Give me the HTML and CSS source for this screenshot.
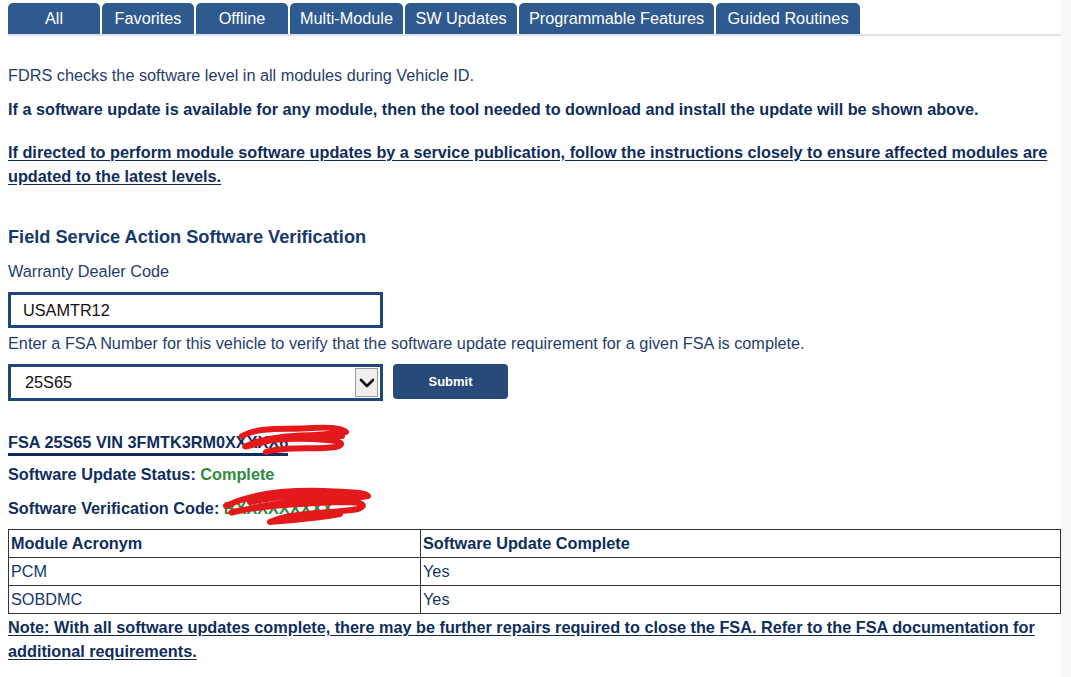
FILE: index.html
```html
<!DOCTYPE html>
<html lang="en">
<head>
<meta charset="utf-8">
<title>FDRS - SW Updates</title>
<link rel="stylesheet" href="styles.css">
</head>
<body>
<div class="page">
  <nav class="tabs">
    <a class="tab tab-all">All</a>
    <a class="tab tab-fav">Favorites</a>
    <a class="tab tab-off">Offline</a>
    <a class="tab tab-multi">Multi-Module</a>
    <a class="tab tab-sw">SW Updates</a>
    <a class="tab tab-prog">Programmable Features</a>
    <a class="tab tab-guided">Guided Routines</a>
  </nav>

  <section class="content">
    <p class="intro">FDRS checks the software level in all modules during Vehicle ID.</p>
    <p class="strong">If a software update is available for any module, then the tool needed to download and install the update will be shown above.</p>
    <p class="strong link">If directed to perform module software updates by a service publication, follow the instructions closely to ensure affected modules are updated to the latest levels.</p>

    <h2 class="section-title">Field Service Action Software Verification</h2>
    <label class="field-label" for="dealer">Warranty Dealer Code</label>
    <input id="dealer" class="text-field" type="text" value="USAMTR12">
    <p class="hint">Enter a FSA Number for this vehicle to verify that the software update requirement for a given FSA is complete.</p>
    <div class="fsa-row">
      <div class="select-box">
        <span class="select-value">25S65</span>
        <span class="select-arrow">
          <svg width="16" height="10" viewBox="0 0 16 10"><path d="M2 2 L8 8 L14 2" fill="none" stroke="#111" stroke-width="2.6" stroke-linecap="round" stroke-linejoin="round"/></svg>
        </span>
      </div>
      <button class="submit" type="button">Submit</button>
    </div>

    <div class="result">
      <h3 class="result-title">FSA 25S65 VIN 3FMTK3RM0XXXXX6
        <svg class="scribble scribble-vin" width="116" height="34" viewBox="0 0 116 34"><path d="M6 14 C24 4 50 8 76 6 C94 5 106 6 110 10 C88 14 60 12 36 18 C18 22 6 26 10 24 C30 16 64 16 92 18 C104 19 110 22 100 25 C78 28 50 24 30 30 M20 20 C50 12 78 12 106 14" fill="none" stroke="#e3191c" stroke-width="6" stroke-linecap="round" stroke-linejoin="round"/></svg>
      </h3>
      <p class="status">Software Update Status: <span class="ok">Complete</span></p>
      <p class="status">Software Verification Code: <span class="ok">BXXXXXXXXX</span>
        <svg class="scribble scribble-code" width="156" height="46" viewBox="0 0 156 46"><path d="M6 22 C30 10 66 6 104 7 C126 8 146 8 148 12 C120 17 80 15 44 22 C22 26 8 30 12 28 C40 22 88 19 126 18 C142 18 148 21 138 25 C108 30 72 28 50 38 C72 36 100 34 120 30 M30 18 C60 12 100 10 140 10" fill="none" stroke="#e3191c" stroke-width="6" stroke-linecap="round" stroke-linejoin="round"/></svg>
      </p>

      <table class="modules">
        <thead>
          <tr><th>Module Acronym</th><th>Software Update Complete</th></tr>
        </thead>
        <tbody>
          <tr><td>PCM</td><td>Yes</td></tr>
          <tr><td>SOBDMC</td><td>Yes</td></tr>
        </tbody>
      </table>
      <p class="strong link note">Note: With all software updates complete, there may be further repairs required to close the FSA. Refer to the FSA documentation for additional requirements.</p>
    </div>
  </section>
</div>
</body>
</html>
```

FILE: styles.css
```css
html, body {
  margin: 0;
  padding: 0;
  background: #f7f7f7;
}

body {
  font-family: "Liberation Sans", Arial, sans-serif;
  font-size: 16.25px;
  color: #1f3d6b;
}

.page {
  width: 1061px;
  min-height: 677px;
  background: #ffffff;
  box-sizing: border-box;
  padding: 3px 0 0 8px;
}

/* Tab strip */
.tabs {
  display: flex;
  gap: 2px;
  border-bottom: 2px solid #dfe2ea;
  height: 31px;
}

.tab {
  display: flex;
  align-items: center;
  justify-content: center;
  height: 31px;
  background: #2f5a8f;
  color: #ffffff;
  font-size: 16.25px;
  border-radius: 5px 5px 0 0;
  box-sizing: border-box;
}

.tab-all { width: 92px; }
.tab-fav { width: 92px; }
.tab-off { width: 92px; }
.tab-multi { width: 113px; }
.tab-sw { width: 112px; }
.tab-prog { width: 195px; }
.tab-guided { width: 144px; }

/* Body copy */
.content {
  padding-top: 29px;
}

p { margin: 0; }

.intro {
  line-height: 20px;
  color: #1f3d6b;
}

.strong {
  font-weight: bold;
  color: #0f2d5c;
  line-height: 24px;
}

.intro + .strong { margin-top: 12px; }

.link {
  text-decoration: underline;
  text-underline-offset: 2px;
}

.strong + .link { margin-top: 19px; }

.section-title {
  margin: 37px 0 0;
  font-size: 18.2px;
  font-weight: bold;
  color: #17396b;
  line-height: 24px;
}

.field-label {
  display: block;
  margin-top: 12px;
  line-height: 20px;
  color: #1f3d6b;
}

.text-field {
  display: block;
  margin-top: 11px;
  width: 375px;
  height: 36px;
  box-sizing: border-box;
  border: 3px solid #1f477f;
  padding: 0 12px;
  font-family: "Liberation Sans", Arial, sans-serif;
  font-size: 16.25px;
  color: #111;
  outline: none;
}

.hint {
  margin-top: 5px;
  line-height: 20px;
  color: #1f3d6b;
}

.fsa-row {
  display: flex;
  gap: 10px;
  margin-top: 11px;
  align-items: flex-start;
}

.select-box {
  display: flex;
  align-items: stretch;
  width: 375px;
  height: 37px;
  box-sizing: border-box;
  border: 3px solid #1f477f;
  background: #fff;
}

.select-value {
  flex: 1;
  display: flex;
  align-items: center;
  padding-left: 14px;
  color: #111;
}

.select-arrow {
  width: 21px;
  margin: 1px 2px 1px 0;
  display: flex;
  align-items: center;
  justify-content: center;
  background: #efefef;
  border: 1px solid #9a9a9a;
}

.submit {
  width: 115px;
  height: 35px;
  border: 0;
  border-radius: 4px;
  background: #274a78;
  color: #fff;
  font-family: "Liberation Sans", Arial, sans-serif;
  font-weight: bold;
  font-size: 13px;
}

/* FSA result */
.result {
  margin-top: 31px;
}

.result-title {
  position: relative;
  display: inline-block;
  margin: 0;
  font-size: 16.25px;
  font-weight: bold;
  color: #0f2d5c;
  line-height: 20px;
  padding-bottom: 1px;
  border-bottom: 3px solid #0f2d5c;
}

.scribble {
  position: absolute;
  pointer-events: none;
}

.scribble-vin {
  left: 228px;
  top: -10px;
}

.status {
  position: relative;
  margin-top: 8px;
  font-weight: bold;
  color: #0f2d5c;
  line-height: 20px;
}

.status + .status { margin-top: 14px; }

.ok { color: #2e8b3e; }

.scribble-code {
  left: 212px;
  top: -14px;
}

.modules {
  margin-top: 11px;
  width: 100%;
  border-collapse: collapse;
  border: 1.5px solid #222;
}

.modules th,
.modules td {
  border: 1px solid #333;
  text-align: left;
  padding: 0 2px;
  height: 27px;
  color: #14386c;
  font-size: 16.25px;
}

.modules th {
  font-weight: bold;
  color: #0f2d5c;
}

.modules th:first-child,
.modules td:first-child { width: 407px; }

.note {
  margin-top: 1px;
}
```
